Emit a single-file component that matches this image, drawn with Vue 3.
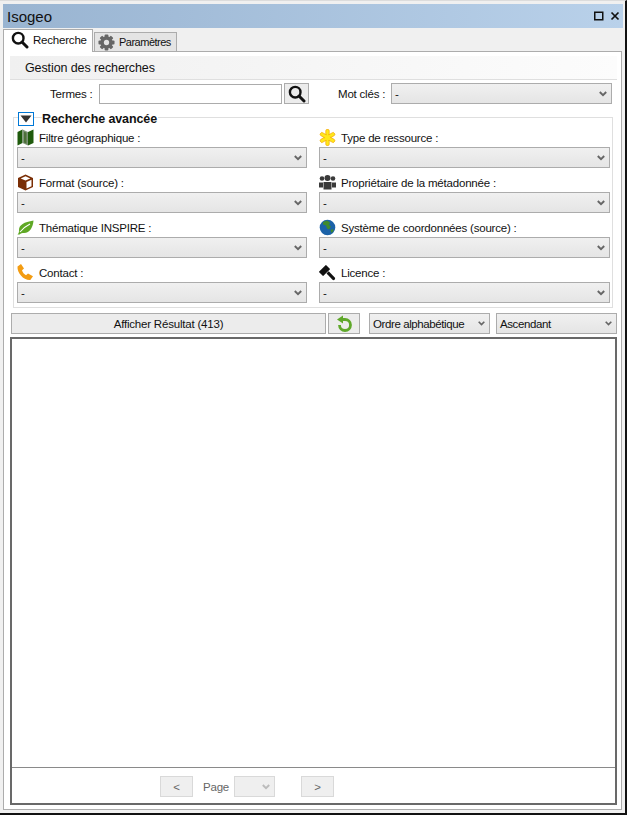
<template>
  <div class="window">
    <div class="titlebar">
      <span class="title">Isogeo</span>
      <svg class="win-btn" width="10" height="10" viewBox="0 0 10 10"><rect x="0.75" y="1.25" width="8" height="7.5" fill="none" stroke="#111" stroke-width="1.5"/></svg>
      <svg class="win-btn" width="10" height="10" viewBox="0 0 10 10"><path d="M1.5 1.5l7 7M8.5 1.5l-7 7" stroke="#111" stroke-width="1.7"/></svg>
    </div>

    <div class="tabs">
      <div class="tab active">
        <svg class="icon" width="18" height="18" viewBox="0 0 18 18"><circle cx="7.2" cy="7.2" r="5.3" fill="none" stroke="#111" stroke-width="2.4"/><path d="M11 11l5 5" stroke="#111" stroke-width="3" stroke-linecap="round"/></svg>
        <span>Recherche</span>
      </div>
      <div class="tab">
        <svg class="icon" width="17" height="17" viewBox="0 0 18 18"><g fill="#666"><circle cx="9" cy="9" r="6.5"/><rect x="7" y="0.5" width="4" height="17" rx="1"/><rect x="7" y="0.5" width="4" height="17" rx="1" transform="rotate(45 9 9)"/><rect x="7" y="0.5" width="4" height="17" rx="1" transform="rotate(90 9 9)"/><rect x="7" y="0.5" width="4" height="17" rx="1" transform="rotate(135 9 9)"/></g><circle cx="9" cy="9" r="2.8" fill="#e4e4e4"/></svg>
        <span>Paramètres</span>
      </div>
    </div>

    <div class="panel">
      <div class="section-head">Gestion des recherches</div>

      <div class="search-row">
        <span class="termes-label">Termes :</span>
        <div class="input"></div>
        <div class="search-btn">
          <svg width="18" height="18" viewBox="0 0 18 18"><circle cx="7.2" cy="7.2" r="5.3" fill="none" stroke="#111" stroke-width="2.4"/><path d="M11 11l5 5" stroke="#111" stroke-width="3" stroke-linecap="round"/></svg>
        </div>
        <span class="keywords-label">Mot clés :</span>
        <div class="select keywords">
          <span>-</span>
          <svg class="chev" width="8" height="6" viewBox="0 0 10 7"><path d="M1 1l4 4 4-4" fill="none" stroke="#666" stroke-width="2.400"/></svg>
        </div>
      </div>

      <div class="group">
        <div class="group-head">
          <div class="toggle"><svg width="12" height="8" viewBox="0 0 12 8"><path d="M0.5 0.5h11L6 7.5z" fill="#333"/></svg></div>
          <span class="group-title">Recherche avancée</span>
        </div>
        <div class="filters">
          <div v-for="f in filters" :key="f.label" class="filter">
            <div class="filter-label">
              <svg class="icon" width="17" height="17" viewBox="0 0 17 17">
                <template v-if="f.icon === 'map'">
                  <path d="M0.5 3l5-2.500v13.500l-5 2.500z" fill="#1f5a0c"/><path d="M5.5 0.500l5.500 2.500v13.500l-5.500-2.500z" fill="#7f9478"/><path d="M7 2.500l2.500 1.200v11l-2.500-1.200z" fill="#4c7038"/><path d="M11 3l5.500-2.500v13.500l-5.500 2.500z" fill="#1f5a0c"/>
                </template>
                <template v-else-if="f.icon === 'star'">
                  <g fill="#ffe81a" stroke="#f5a800" stroke-width="0.700"><rect x="6.800" y="0.500" width="3.400" height="16" rx="1.200"/><rect x="6.800" y="0.500" width="3.400" height="16" rx="1.200" transform="rotate(60 8.500 8.500)"/><rect x="6.800" y="0.500" width="3.400" height="16" rx="1.200" transform="rotate(120 8.500 8.500)"/></g>
                  <circle cx="8.500" cy="8.500" r="2.600" fill="#ffe81a"/>
                </template>
                <template v-else-if="f.icon === 'box'">
                  <path d="M8.500 0.500l7.500 3.500v9l-7.500 3.500-7.500-3.500v-9z" fill="#7a2e05"/><path d="M8.500 2.200l4.800 2.200-4.800 2.200-4.800-2.200z" fill="#fff"/><path d="M9.500 8l5-2.300v6.500l-5 2.300z" fill="#fff"/>
                </template>
                <template v-else-if="f.icon === 'group'">
                  <g fill="#3a3a3a"><circle cx="3" cy="4.500" r="2.300"/><circle cx="14" cy="4.500" r="2.300"/><circle cx="8.500" cy="4" r="3"/><path d="M0 8.500h4v5H0z"/><path d="M13 8.500h4v5h-4z"/><path d="M4.500 8h8v7.500h-8z"/></g>
                </template>
                <template v-else-if="f.icon === 'leaf'">
                  <path d="M0.500 15.500C2 14 2 13 2 11 2 6 7 3 16.500 1.500 16 8 13 14 7 14c-2 0-3 0-4.500 1.500z" fill="#5fa825"/><path d="M3 13C6 9 9 7 13 5" stroke="#fff" stroke-width="1.100" fill="none"/>
                </template>
                <template v-else-if="f.icon === 'globe'">
                  <circle cx="8.500" cy="8.500" r="7.800" fill="#1b62a8"/><path d="M4 3l4-1.500 3 2-1 2.500 2 1.500-2 3-2-1-1-3-3-1z" fill="#3f8a2e"/><path d="M11.500 11l2.500-1 0.500 2-2 2z" fill="#3f8a2e"/>
                </template>
                <template v-else-if="f.icon === 'phone'">
                  <path d="M0.500 2.500L4 0l3 4.500-2 1.800c.6 2.200 2 3.900 4 4.900l2-1.800 5 2.900-2.700 3.700C6.500 16.500 0 9 0.500 2.500z" fill="#f39c12"/>
                </template>
                <template v-else>
                  <rect x="0.500" y="3.500" width="10" height="6" rx="0.500" transform="rotate(-45 5.500 6.500)" fill="#111"/><path d="M7.500 9.500l2.200-2.200 6.300 6.500c.6 1.400-.8 2.800-2.200 2.200z" fill="#111"/>
                </template>
              </svg>
              <span class="filter-text">{{ f.label }}</span>
            </div>
            <div class="select">
              <span>-</span>
              <svg class="chev" width="8" height="6" viewBox="0 0 10 7"><path d="M1 1l4 4 4-4" fill="none" stroke="#666" stroke-width="2.400"/></svg>
            </div>
          </div>
        </div>
      </div>

      <div class="actions">
        <div class="btn show">Afficher Résultat (413)</div>
        <div class="btn refresh">
          <svg width="16" height="17" viewBox="0 0 16 17"><path d="M6 4.500h3a5.500 5.500 0 1 1-5.500 5.500" fill="none" stroke="#5fa82a" stroke-width="2.800"/><path d="M1 4.500L7 0.500v8z" fill="#5fa82a"/></svg>
        </div>
        <div class="select sort">
          <span>Ordre alphabétique</span>
          <svg class="chev" width="7" height="5" viewBox="0 0 10 7"><path d="M1 1l4 4 4-4" fill="none" stroke="#666" stroke-width="2.400"/></svg>
        </div>
        <div class="select order">
          <span>Ascendant</span>
          <svg class="chev" width="7" height="5" viewBox="0 0 10 7"><path d="M1 1l4 4 4-4" fill="none" stroke="#666" stroke-width="2.400"/></svg>
        </div>
      </div>

      <div class="results">
        <div class="results-body"></div>
        <div class="pager">
          <div class="btn pager-btn">&lt;</div>
          <span class="page-label">Page</span>
          <div class="select page-select">
            <svg class="chev" width="8" height="6" viewBox="0 0 10 7"><path d="M1 1l4 4 4-4" fill="none" stroke="#bbb" stroke-width="2.400"/></svg>
          </div>
          <div class="btn pager-btn next">&gt;</div>
        </div>
      </div>
    </div>
  </div>
</template>

<script setup>
const filters = [
  { label: 'Filtre géographique :', icon: 'map' },
  { label: 'Type de ressource :', icon: 'star' },
  { label: 'Format (source) :', icon: 'box' },
  { label: 'Propriétaire de la métadonnée :', icon: 'group' },
  { label: 'Thématique INSPIRE :', icon: 'leaf' },
  { label: 'Système de coordonnées (source) :', icon: 'globe' },
  { label: 'Contact :', icon: 'phone' },
  { label: 'Licence :', icon: 'gavel' }
]
</script>

<style>
body {
  background: #f0f0f0;
}
</style>

<style scoped>
.window {
  box-sizing: border-box;
  width: 627px;
  height: 815px;
  padding: 3px 2px 3px 3px;
  background: #f0f0f0;
  border-top: 1px solid #dcdcdc;
  border-right: 2px solid #111;
  border-bottom: 2px solid #111;
  font-family: "Liberation Sans", Arial, sans-serif;
  font-size: 11.500px;
  letter-spacing: -0.200px;
  color: #111;
  display: flex;
  flex-direction: column;
}

.titlebar {
  height: 24px;
  flex: none;
  display: flex;
  align-items: center;
  gap: 6px;
  padding: 0 3px 0 4px;
  background: linear-gradient(to right, #99b4d1, #b9d1ea);
}

.title {
  font-size: 15px;
  letter-spacing: 0;
  padding-top: 1px;
  flex: 1;
}

.win-btn {
  flex: none;
}

.tabs {
  height: 23px;
  flex: none;
  display: flex;
  align-items: flex-end;
  position: relative;
  z-index: 1;
}

.tab {
  box-sizing: border-box;
  width: 83px;
  height: 19px;
  margin-left: 1px;
  display: flex;
  align-items: center;
  gap: 4px;
  padding-left: 3px;
  background: #e4e4e4;
  border: 1px solid #acacac;
  border-bottom: 0;
  font-size: 11px;
  letter-spacing: -0.500px;
  white-space: nowrap;
}

.tab.active {
  width: 90px;
  height: 23px;
  margin-bottom: -1px;
  margin-left: 0;
  gap: 4px;
  padding-left: 7px;
  padding-bottom: 3px;
  background: #fff;
  font-size: 11.500px;
  letter-spacing: -0.200px;
}

.icon {
  flex: none;
}

.panel {
  box-sizing: border-box;
  flex: 1;
  min-height: 0;
  margin-right: 1px;
  background: #fff;
  border: 1px solid #acacac;
  padding: 4px 4px 4px 6px;
  display: flex;
  flex-direction: column;
}

.section-head {
  height: 24px;
  flex: none;
  box-sizing: border-box;
  padding-left: 15px;
  display: flex;
  align-items: center;
  background: linear-gradient(to right, #f0f0f0, #fcfcfc);
  border-bottom: 1px solid #dfdfdf;
  font-size: 12.500px;
  letter-spacing: -0.100px;
}

.search-row {
  height: 21px;
  margin-top: 3px;
  flex: none;
  display: flex;
  align-items: center;
}

.termes-label {
  margin-left: 40px;
  width: 49px;
  white-space: nowrap;
}

.input {
  box-sizing: border-box;
  width: 183px;
  height: 20px;
  background: #fff;
  border: 1px solid #acacac;
}

.search-btn {
  box-sizing: border-box;
  width: 25px;
  height: 21px;
  margin-left: 2px;
  display: flex;
  align-items: center;
  justify-content: center;
  background: #ececec;
  border: 1px solid #acacac;
}

.keywords-label {
  margin-left: 29px;
  width: 53px;
  white-space: nowrap;
}

.select {
  box-sizing: border-box;
  height: 21px;
  display: flex;
  align-items: center;
  justify-content: space-between;
  padding: 0 4px 0 3px;
  background: linear-gradient(to bottom, #f0f0f0, #e5e5e5);
  border: 1px solid #acacac;
  white-space: nowrap;
}

.keywords {
  width: 221px;
}

.chev {
  flex: none;
}

.group {
  box-sizing: border-box;
  width: 600px;
  height: 191px;
  margin: 13px 0 0 3px;
  flex: none;
  border: 1px solid #dfdfdf;
  padding: 0 2px 0 3px;
}

.group-head {
  height: 14px;
  margin: -6px 0 0 1px;
  display: flex;
  align-items: center;
}

.toggle {
  box-sizing: border-box;
  width: 16px;
  height: 14px;
  flex: none;
  display: flex;
  align-items: center;
  justify-content: center;
  background: #fff;
  border: 1px solid #0078d7;
}

.group-title {
  margin-left: 8px;
  padding-right: 1px;
  background: #fff;
  font-size: 12.500px;
  letter-spacing: -0.100px;
  font-weight: 700;
}

.filters {
  display: grid;
  grid-template-columns: 290px 291px;
  column-gap: 12px;
  row-gap: 4px;
  margin-top: 1px;
}

.filter-label {
  height: 20px;
  display: flex;
  align-items: center;
  gap: 5px;
  white-space: nowrap;
}

.filter-text {
  padding-top: 2px;
}

.actions {
  height: 21px;
  margin-top: 5px;
  flex: none;
  display: flex;
  align-items: center;
  margin-left: 1px;
}

.btn {
  box-sizing: border-box;
  height: 21px;
  display: flex;
  align-items: center;
  justify-content: center;
  background: #ececec;
  border: 1px solid #acacac;
}

.show {
  width: 315px;
}

.refresh {
  width: 32px;
  margin-left: 2px;
}

.sort {
  width: 121px;
  margin-left: 9px;
  letter-spacing: -0.400px;
}

.order {
  width: 121px;
  margin-left: 6px;
  letter-spacing: -0.400px;
}

.results {
  box-sizing: border-box;
  width: 607px;
  height: 468px;
  margin-top: 3px;
  flex: none;
  display: flex;
  flex-direction: column;
  border: 2px solid #696969;
  background: #fff;
}

.results-body {
  flex: 1;
  border-bottom: 1px solid #8a8a8a;
}

.pager {
  height: 35px;
  flex: none;
  display: flex;
  align-items: center;
  padding: 2px 0 0 148px;
  box-sizing: border-box;
}

.pager-btn {
  width: 33px;
  background: #efefef;
  border-color: #d9d9d9;
  color: #666;
}

.next {
  margin-left: 26px;
}

.page-label {
  width: 31px;
  margin-left: 10px;
  color: #666;
}

.page-select {
  width: 41px;
  justify-content: flex-end;
  background: #efefef;
  border-color: #d9d9d9;
}
</style>
